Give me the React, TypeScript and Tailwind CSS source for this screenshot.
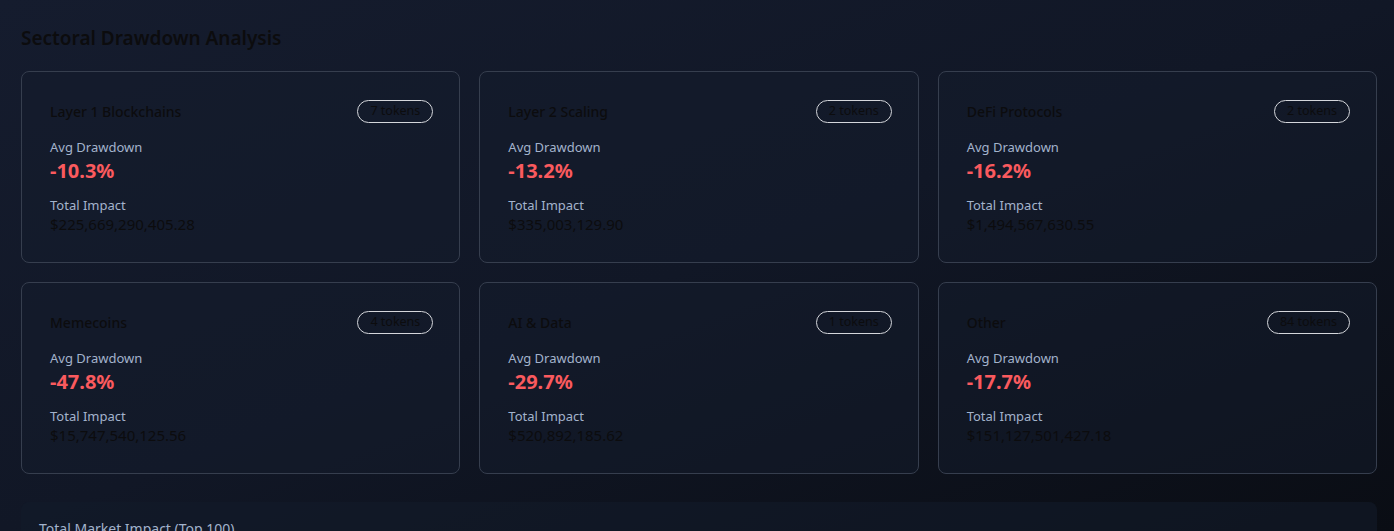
const sectors = [
  { name: "Layer 1 Blockchains", tokens: 7, drawdown: "-10.3%", impact: "$225,669,290,405.28" },
  { name: "Layer 2 Scaling", tokens: 2, drawdown: "-13.2%", impact: "$335,003,129.90" },
  { name: "DeFi Protocols", tokens: 2, drawdown: "-16.2%", impact: "$1,494,567,630.55" },
  { name: "Memecoins", tokens: 4, drawdown: "-47.8%", impact: "$15,747,540,125.56" },
  { name: "AI & Data", tokens: 1, drawdown: "-29.7%", impact: "$520,892,185.62" },
  { name: "Other", tokens: 84, drawdown: "-17.7%", impact: "$151,127,501,427.18" },
];

function SectorCard({ sector }: { sector: (typeof sectors)[number] }) {
  return (
    <div className="h-[192px] rounded-lg border border-[#363e4e] bg-[#141b2c]/50 pl-7 pr-[26px] pt-7">
      <div className="flex h-[23px] items-center justify-between">
        <h3 className="text-[14px] font-medium text-[#0c0c0e]">{sector.name}</h3>
        <span className="flex h-[23px] items-center rounded-full border border-[#d4d6db] px-[12px] text-[12.5px] text-[#0c0c0e]">
          {sector.tokens} tokens
        </span>
      </div>
      <p className="mt-[14px] text-[13px] leading-5 text-[#a3b3cc]">Avg Drawdown</p>
      <p className="text-[20px] font-bold leading-7 text-[#fa5a5e]">{sector.drawdown}</p>
      <p className="mt-[10px] text-[13px] leading-5 text-[#a3b3cc]">Total Impact</p>
      <p className="text-[15px] leading-[18px] text-[#0c0c0e]">{sector.impact}</p>
    </div>
  );
}

export default function App() {
  return (
    <div
      className="h-[531px] overflow-hidden bg-gradient-to-br from-[#151c2e] via-[#111726] to-[#0a0d14] pl-[21px] pr-[17px] pt-6"
      style={{ fontFamily: '"Noto Sans", "Open Sans", sans-serif' }}
    >
      <h2 className="text-[19px] font-semibold leading-7 text-[#0c0c0e]">Sectoral Drawdown Analysis</h2>
      <div className="mt-[19px] grid grid-cols-3 gap-[19px]">
        {sectors.map((s) => (
          <SectorCard key={s.name} sector={s} />
        ))}
      </div>
      <div className="mt-[28px] h-[80px] rounded-lg bg-[#131a2a]/60 px-[18px] pt-[16px]">
        <p className="text-[14px] text-[#a3b3cc]">Total Market Impact (Top 100)</p>
      </div>
    </div>
  );
}
